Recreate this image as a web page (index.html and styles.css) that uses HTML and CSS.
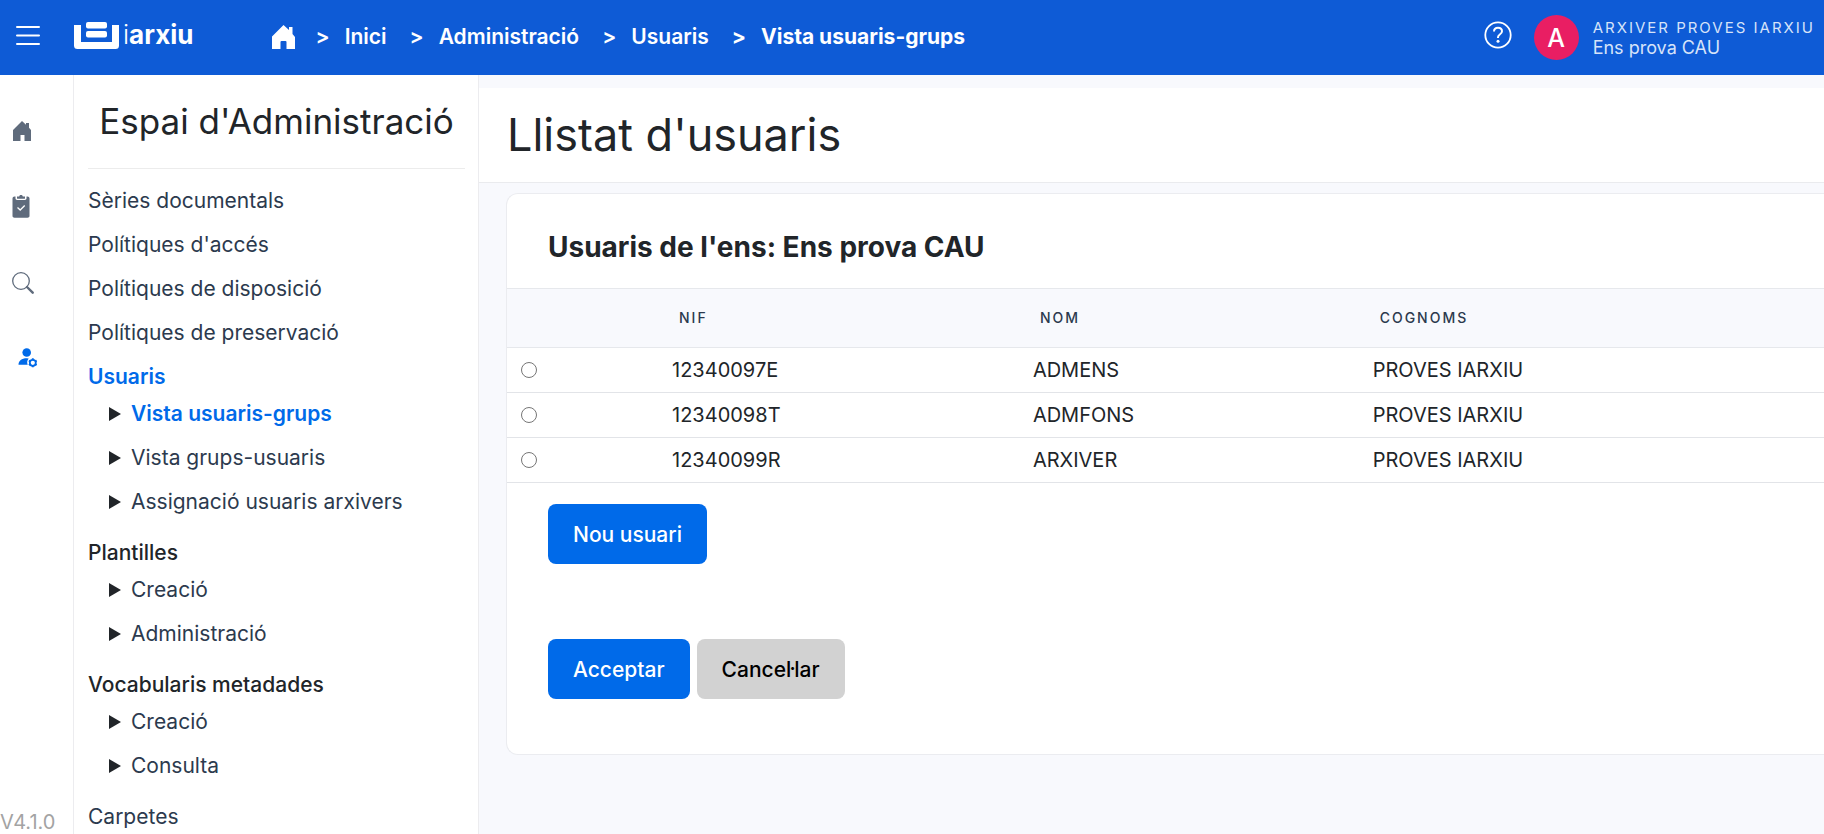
FILE: index.html
```html
<!DOCTYPE html>
<html lang="ca">
<head>
<meta charset="utf-8">
<meta name="viewport" content="width=device-width, initial-scale=1">
<title>iarxiu - Llistat d'usuaris</title>
<link rel="stylesheet" href="styles.css">
</head>
<body>
<header class="topbar">
  <button class="menu-button" type="button" aria-label="Menú">
    <svg width="24" height="20" viewBox="0 0 24 20" fill="none" stroke="#fff" stroke-width="2" stroke-linecap="round"><path d="M1 2h22M1 10.500h22M1 19h22"/></svg>
  </button>
  <a class="logo" href="#">
    <svg width="45" height="27" viewBox="0 0 45 27" fill="#fff"><path d="M0 3h7v17h31V3h7v20.500a3.500 3.500 0 0 1-3.500 3.500h-38A3.500 3.500 0 0 1 0 23.500z"/><rect x="12" width="21" height="6.500" rx="2"/><rect x="12" y="9" width="21" height="6.500" rx="2"/></svg>
    <span class="logo-text"><span class="logo-thin">i</span>arxiu</span>
  </a>
  <nav class="breadcrumb" aria-label="Ruta">
    <a class="crumb-home" href="#" aria-label="Pàgina principal">
      <svg width="23" height="24" viewBox="0 0 23 24" fill="#fff"><path d="M11.500 0 17 5V2h3.500v7L23 12v12h-8.500v-7a1 1 0 0 0-1-1h-4a1 1 0 0 0-1 1v7H0V11.500z"/></svg>
    </a>
    <span class="crumb-sep">&gt;</span><a href="#">Inici</a>
    <span class="crumb-sep">&gt;</span><a href="#">Administració</a>
    <span class="crumb-sep">&gt;</span><a href="#">Usuaris</a>
    <span class="crumb-sep crumb-current">&gt;</span><a class="crumb-current" href="#" aria-current="page">Vista usuaris-grups</a>
  </nav>
  <button class="help-button" type="button" aria-label="Ajuda">
    <svg width="28" height="28" viewBox="0 0 28 28" fill="none" stroke="#fff" stroke-width="2"><circle cx="14" cy="14" r="12.700" stroke-width="1.800"/><path d="M10 10.500c.1-2.300 1.700-3.700 4-3.700s4 1.400 4 3.500c0 1.500-.8 2.300-2.200 3.200-1.300.9-1.800 1.500-1.800 2.700v.9"/><circle cx="14" cy="20.200" r="1.500" fill="#fff" stroke="none"/></svg>
  </button>
  <div class="account">
    <span class="avatar">A</span>
    <div class="account-info">
      <span class="account-name">ARXIVER PROVES IARXIU</span>
      <span class="account-org">Ens prova CAU</span>
    </div>
  </div>
</header>
<div class="layout">
  <nav class="rail" aria-label="Seccions">
    <a href="#" aria-label="Inici"><svg width="20" height="20" viewBox="0 0 20 20" fill="#5f6b7c"><path d="M10 0l4 3.700V2h3v4.700L19 9v11h-6.500v-6h-4v6H1V9z"/></svg></a>
    <a href="#" aria-label="Tasques"><svg width="18" height="23" viewBox="0 0 18 23" fill="#5f6b7c"><path d="M3.500 1.500v1.800c0 1 .7 1.700 1.700 1.700h7.600c1 0 1.700-.7 1.700-1.700V1.500h1c1.100 0 2 .9 2 2V21c0 1.100-.9 1.700-2 1.700h-13c-1.100 0-2-.6-2-1.700V3.500c0-1.100.9-2 2-2z"/><path d="M5 1.400h2.200C7.500.5 8.100 0 9 0s1.500.5 1.800 1.400H13v1.800c0 .4-.3.600-.7.600H5.700c-.4 0-.7-.2-.7-.6z"/><path d="m5.500 12.500 2.700 2.500 4.500-4.500" fill="none" stroke="#fff" stroke-width="1.300"/></svg></a>
    <a href="#" aria-label="Cerca"><svg width="22" height="22" viewBox="0 0 22 22" fill="none" stroke="#5f6b7c"><circle cx="9" cy="9" r="8.300" stroke-width="1.300"/><path d="m15 15 5.700 5.700" stroke-width="2.400" stroke-linecap="round"/></svg></a>
    <a class="rail-admin" href="#" aria-label="Administració"><svg width="20" height="20" viewBox="0 0 20 20" fill="#006ae9"><circle cx="8.700" cy="4.500" r="4.300"/><path d="M.5 16.800c0-4 3.200-6.500 8.200-6.500l2 .2a6 6 0 0 0-1 6.300z"/><circle cx="14.800" cy="14.800" r="3" fill="none" stroke="#006ae9" stroke-width="1.800"/><path d="M14.800 10.300v1.500M14.800 17.800v1.500M10.900 12.600l1.300.700M17.400 16.300l1.300.700M10.900 17l1.300-.7M17.400 13.300l1.300-.7" stroke="#006ae9" stroke-width="1.900"/></svg></a>
    <span class="version">V4.1.0</span>
  </nav>
  <aside class="sidebar">
    <h2 class="sidebar-title">Espai d'Administració</h2>
    <ul class="menu">
      <li><a href="#">Sèries documentals</a></li>
      <li><a href="#">Polítiques d'accés</a></li>
      <li><a href="#">Polítiques de disposició</a></li>
      <li><a href="#">Polítiques de preservació</a></li>
      <li><a class="active" href="#">Usuaris</a>
        <ul class="submenu">
          <li><a class="active" href="#">Vista usuaris-grups</a></li>
          <li><a href="#">Vista grups-usuaris</a></li>
          <li><a href="#">Assignació usuaris arxivers</a></li>
        </ul>
      </li>
      <li><span class="group">Plantilles</span>
        <ul class="submenu">
          <li><a href="#">Creació</a></li>
          <li><a href="#">Administració</a></li>
        </ul>
      </li>
      <li><span class="group">Vocabularis metadades</span>
        <ul class="submenu">
          <li><a href="#">Creació</a></li>
          <li><a href="#">Consulta</a></li>
        </ul>
      </li>
      <li><a href="#">Carpetes</a></li>
    </ul>
  </aside>
  <main class="content">
    <h1 class="page-title">Llistat d'usuaris</h1>
    <form class="card">
      <h2 class="card-title">Usuaris de l'ens: Ens prova CAU</h2>
      <table class="users">
        <thead>
          <tr><th class="col-pick" scope="col"></th><th class="col-nif" scope="col">NIF</th><th class="col-nom" scope="col">NOM</th><th scope="col">COGNOMS</th></tr>
        </thead>
        <tbody>
          <tr><td><input type="radio" name="user" id="u1" aria-label="12340097E"></td><td><label for="u1">12340097E</label></td><td>ADMENS</td><td>PROVES IARXIU</td></tr>
          <tr><td><input type="radio" name="user" id="u2" aria-label="12340098T"></td><td><label for="u2">12340098T</label></td><td>ADMFONS</td><td>PROVES IARXIU</td></tr>
          <tr><td><input type="radio" name="user" id="u3" aria-label="12340099R"></td><td><label for="u3">12340099R</label></td><td>ARXIVER</td><td>PROVES IARXIU</td></tr>
        </tbody>
      </table>
      <div class="actions">
        <button class="btn btn-primary" type="button">Nou usuari</button>
      </div>
      <div class="actions actions-final">
        <button class="btn btn-primary" type="submit">Acceptar</button>
        <button class="btn btn-secondary" type="button">Cancel·lar</button>
      </div>
    </form>
  </main>
</div>
</body>
</html>
```
FILE: styles.css
```css
* {
  box-sizing: border-box;
}

body {
  margin: 0;
  height: 100vh;
  overflow: hidden;
  display: flex;
  flex-direction: column;
  font-family: Inter, "Liberation Sans", sans-serif;
  font-size: 20px;
  line-height: 30px;
  color: #212529;
  background: #fff;
}

a {
  color: inherit;
  text-decoration: none;
}

svg {
  display: block;
}

button {
  font-family: inherit;
  border: 0;
  cursor: pointer;
}

h1,
h2,
ul {
  margin: 0;
  padding: 0;
}

.topbar {
  flex: none;
  display: flex;
  align-items: center;
  height: 75px;
  padding: 0 9px 0 16px;
  background: #0e5bd6;
  color: #fff;
}

.menu-button,
.help-button {
  padding: 0 0 6px;
  background: none;
}

.logo {
  display: flex;
  align-items: center;
  gap: 4px;
  margin-left: 34px;
  padding-bottom: 5px;
}

.logo-text {
  font-size: 26px;
  font-weight: 700;
}

.logo-thin {
  font-weight: 300;
}

.breadcrumb {
  display: flex;
  align-items: center;
  margin-left: 79px;
  padding-bottom: 2px;
  font-size: 21px;
  font-weight: 600;
}

.crumb-sep {
  margin: 0 15px 0 23px;
}

.crumb-home + .crumb-sep {
  margin-left: 20px;
}

.crumb-current {
  font-weight: 700;
}

.help-button {
  margin-left: auto;
}

.account {
  display: flex;
  align-items: center;
  margin-left: 22px;
  gap: 14px;
}

.avatar {
  display: flex;
  align-items: center;
  justify-content: center;
  width: 45px;
  height: 45px;
  border-radius: 50%;
  background: #e91e63;
  font-size: 25px;
  font-weight: 500;
}

.account-info {
  display: flex;
  flex-direction: column;
  line-height: 20px;
  color: #d6e3f9;
}

.account-name {
  font-size: 15px;
  letter-spacing: 2px;
}

.account-org {
  font-size: 18px;
}

.layout {
  flex: 1;
  min-height: 0;
  display: flex;
}

.rail {
  flex: none;
  display: flex;
  flex-direction: column;
  align-items: flex-start;
  gap: 54px;
  width: 74px;
  padding: 46px 0 0 12px;
  border-right: 1px solid #ececef;
}

.rail-admin {
  padding-left: 6px;
}

.version {
  margin: auto 0 -3px -12px;
  color: #a3a3a3;
}

.sidebar {
  flex: none;
  width: 405px;
  padding: 0 13px 0 14px;
  border-right: 1px solid #ececef;
}

.sidebar-title {
  padding: 26px 0 27px;
  border-bottom: 1px solid #ececec;
  font-size: 35px;
  font-weight: 400;
  line-height: 40px;
  text-align: center;
}

.menu {
  display: flex;
  flex-direction: column;
  gap: 14px;
  padding-top: 17px;
  list-style: none;
  font-size: 21px;
  color: #2c3a4e;
}

.submenu {
  display: flex;
  flex-direction: column;
  gap: 14px;
  margin: 7px 0;
  padding-left: 21px;
  list-style: none;
}

.submenu li {
  display: flex;
  align-items: center;
  gap: 10px;
}

.submenu li::before {
  content: "";
  width: 12px;
  height: 14px;
  background: #212529;
  clip-path: polygon(0 0, 100% 50%, 0 100%);
}

.menu .active {
  font-weight: 600;
  color: #006ae9;
}

.group {
  font-weight: 500;
  color: #212529;
}

.content {
  flex: 1;
  min-width: 0;
  padding-top: 13px;
  background: #f8f9fd;
}

.page-title {
  padding: 17px 28px;
  border-bottom: 1px solid #eaebee;
  background: #fff;
  font-size: 45px;
  font-weight: 400;
  line-height: 60px;
}

.card {
  margin: 10px 0 0 27px;
  padding-bottom: 55px;
  border: solid #ebecf0;
  border-width: 1px 0 1px 1px;
  border-radius: 12px 0 0 12px;
  background: #fff;
}

.card-title {
  padding: 33px 41px 21px;
  font-size: 28px;
  font-weight: 700;
  line-height: 40px;
}

.users {
  width: 100%;
  table-layout: fixed;
  border-collapse: collapse;
  text-align: left;
}

.col-pick {
  width: 12%;
}

.col-nif {
  width: 27.4%;
}

.col-nom {
  width: 25.8%;
}

.users th {
  height: 59px;
  padding: 0 14px;
  border: solid #e6e8ec;
  border-width: 1px 0;
  background: #f8f9fd;
  font-size: 14px;
  font-weight: 500;
  letter-spacing: 2px;
  color: #2c3a4e;
}

.users td {
  height: 45px;
  padding: 0 7px;
  border-bottom: 1px solid #e2e4e8;
  font-size: 20px;
}

.users input {
  display: block;
  width: 16px;
  height: 16px;
  margin: 0 7px;
}

.actions {
  display: flex;
  gap: 7px;
  padding: 21px 41px 0;
}

.actions-final {
  padding-top: 75px;
}

.btn {
  height: 60px;
  padding: 0 25px;
  border-radius: 8px;
  font-size: 21px;
  font-weight: 500;
}

.btn-primary {
  background: #006ae9;
  color: #fff;
}

.btn-secondary {
  background: #d2d2d2;
  color: #000;
}
```
